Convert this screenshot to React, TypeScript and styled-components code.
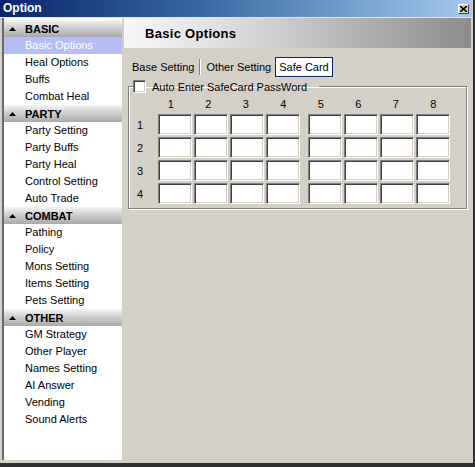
import React from "react";
import styled, { createGlobalStyle } from "styled-components";

const Global = createGlobalStyle`
  html, body { margin: 0; padding: 0; background: #303030; }
  body {
    font-family: Tahoma, "Liberation Sans", Arial, sans-serif;
    font-size: 11px;
    color: #000;
  }
  * { box-sizing: border-box; }
`;

const Window = styled.div`
  width: 473px;
  height: 463px;
  background: #d4d0c8;
  border-right: 1px solid #d4d0c8;
  display: flex;
  flex-direction: column;
`;

const TitleBar = styled.div`
  height: 18px;
  flex: none;
  display: flex;
  align-items: center;
  justify-content: space-between;
  padding: 0 3px 0 3px;
  background: linear-gradient(to right, #0a246a 0%, #3a6ea5 45%, #a6caf0 100%);
  border-bottom: 1px solid #e8e6e0;
`;

const Title = styled.span`
  color: #fff;
  font-weight: bold;
  font-size: 12px;
  line-height: 17px;
`;

const CloseButton = styled.div`
  width: 11px;
  height: 10px;
  margin-top: 1px;
  background: #d4d0c8;
  border-top: 1px solid #fff;
  border-left: 1px solid #fff;
  border-right: 1px solid #404040;
  border-bottom: 1px solid #404040;
  display: flex;
  align-items: center;
  justify-content: center;
`;

const Body = styled.div`
  flex: 1;
  display: flex;
  padding: 0 0 3px 2px;
  min-height: 0;
`;

const Sidebar = styled.div`
  width: 120px;
  flex: none;
  background: #fff;
  border-left: 2px solid #6b6b6b;
  padding-top: 2px;
  display: flex;
  flex-direction: column;
`;

const SectionHeader = styled.div`
  height: 17px;
  display: flex;
  align-items: center;
  padding-left: 5px;
  gap: 9px;
  font-weight: bold;
  font-size: 11px;
  background: linear-gradient(to bottom, #f4f4f4 0%, #d0d0d0 45%, #a9a9a9 100%);
`;

const Item = styled.div<{ $selected?: boolean }>`
  height: 17px;
  line-height: 17px;
  padding-left: 21px;
  white-space: nowrap;
  color: ${(p) => (p.$selected ? "#fff" : "#000")};
  background: ${(p) => (p.$selected ? "#b5bdf4" : "transparent")};
`;

const Main = styled.div`
  flex: 1;
  margin-left: 2px;
  margin-right: 1px;
  display: flex;
  flex-direction: column;
`;

const Header = styled.div`
  height: 30px;
  flex: none;
  display: flex;
  align-items: center;
  padding-left: 21px;
  font-size: 13px;
  font-weight: bold;
  letter-spacing: 0.3px;
  background: linear-gradient(to right, #f7f7f7 0%, #d8d8d8 35%, #8c8c8c 100%);
`;

const Tabs = styled.div`
  display: flex;
  align-items: center;
  height: 20px;
  margin-top: 9px;
  padding-left: 4px;
`;

const Tab = styled.div<{ $active?: boolean }>`
  height: 20px;
  line-height: 18px;
  padding: 0 3px;
  border: 1px solid ${(p) => (p.$active ? "#0a246a" : "transparent")};
  background: ${(p) => (p.$active ? "#fff" : "transparent")};
  white-space: nowrap;
`;

const TabSeparator = styled.div`
  width: 2px;
  height: 16px;
  margin: 0 1px;
  border-left: 1px solid #808080;
  border-right: 1px solid #fff;
`;

const Group = styled.fieldset`
  margin: 3px 4px 0 4px;
  padding: 0 0 4px 0;
  border: 1px solid #808080;
  box-shadow: 1px 1px 0 #fff, inset 1px 1px 0 #fff;
  min-width: 0;
`;

const Legend = styled.legend`
  margin-left: 4px;
  padding: 0 12px 0 0;
  display: flex;
  align-items: center;
  gap: 6px;
  height: 13px;
`;

const CheckBox = styled.span`
  width: 13px;
  height: 13px;
  background: #fff;
  border-top: 1px solid #808080;
  border-left: 1px solid #808080;
  border-right: 1px solid #fff;
  border-bottom: 1px solid #fff;
  box-shadow: inset 1px 1px 0 #404040, inset -1px -1px 0 #d4d0c8;
`;

const HeaderRow = styled.div`
  display: flex;
  height: 17px;
  align-items: center;
  margin-top: 2px;
  padding-left: 23px;
`;

const ColNum = styled.div`
  width: 37.5px;
  text-align: center;
`;

const Grid = styled.div`
  display: flex;
  flex-direction: column;
  gap: 2px;
  margin-top: 2px;
`;

const Row = styled.div`
  display: flex;
  align-items: center;
`;

const RowLabel = styled.div`
  width: 29px;
  padding-left: 8px;
`;

const CellGroup = styled.div<{ $offset?: number }>`
  display: flex;
  gap: 2px;
  margin-left: ${(p) => p.$offset ?? 0}px;
`;

const Cell = styled.div`
  width: 34px;
  height: 21px;
  background: #fff;
  border-top: 1px solid #808080;
  border-left: 1px solid #808080;
  border-right: 1px solid #fff;
  border-bottom: 1px solid #fff;
  box-shadow: inset 1px 1px 0 #404040, inset -1px -1px 0 #d4d0c8;
`;

const sections: { title: string; items: string[] }[] = [
  { title: "BASIC", items: ["Basic Options", "Heal Options", "Buffs", "Combat Heal"] },
  { title: "PARTY", items: ["Party Setting", "Party Buffs", "Party Heal", "Control Setting", "Auto Trade"] },
  { title: "COMBAT", items: ["Pathing", "Policy", "Mons Setting", "Items Setting", "Pets Setting"] },
  { title: "OTHER", items: ["GM Strategy", "Other Player", "Names Setting", "AI Answer", "Vending", "Sound Alerts"] },
];

const Triangle = () => (
  <svg width="7" height="4" viewBox="0 0 7 4">
    <path d="M3.5 0 L7 4 L0 4 Z" fill="#000" />
  </svg>
);

const CloseX = () => (
  <svg width="7" height="6" viewBox="0 0 7 6">
    <path d="M0 0 L7 6 M7 0 L0 6" stroke="#000" strokeWidth="1.6" />
  </svg>
);

export default function App() {
  const rows = [1, 2, 3, 4];
  return (
    <>
      <Global />
      <Window>
        <TitleBar>
          <Title>Option</Title>
          <CloseButton>
            <CloseX />
          </CloseButton>
        </TitleBar>
        <Body>
          <Sidebar>
            {sections.map((s) => (
              <React.Fragment key={s.title}>
                <SectionHeader>
                  <Triangle />
                  <span>{s.title}</span>
                </SectionHeader>
                {s.items.map((it) => (
                  <Item key={it} $selected={it === "Basic Options"}>
                    {it}
                  </Item>
                ))}
              </React.Fragment>
            ))}
          </Sidebar>
          <Main>
            <Header>Basic Options</Header>
            <Tabs>
              <Tab>Base Setting</Tab>
              <TabSeparator />
              <Tab>Other Setting</Tab>
              <Tab $active>Safe Card</Tab>
            </Tabs>
            <Group>
              <Legend>
                <CheckBox />
                <span>Auto Enter SafeCard PassWord</span>
              </Legend>
              <HeaderRow>
                {[1, 2, 3, 4, 5, 6, 7, 8].map((n) => (
                  <ColNum key={n}>{n}</ColNum>
                ))}
              </HeaderRow>
              <Grid>
                {rows.map((r) => (
                  <Row key={r}>
                    <RowLabel>{r}</RowLabel>
                    <CellGroup>
                      {[1, 2, 3, 4].map((c) => (
                        <Cell key={c} />
                      ))}
                    </CellGroup>
                    <CellGroup $offset={8}>
                      {[5, 6, 7, 8].map((c) => (
                        <Cell key={c} />
                      ))}
                    </CellGroup>
                  </Row>
                ))}
              </Grid>
            </Group>
          </Main>
        </Body>
      </Window>
    </>
  );
}
